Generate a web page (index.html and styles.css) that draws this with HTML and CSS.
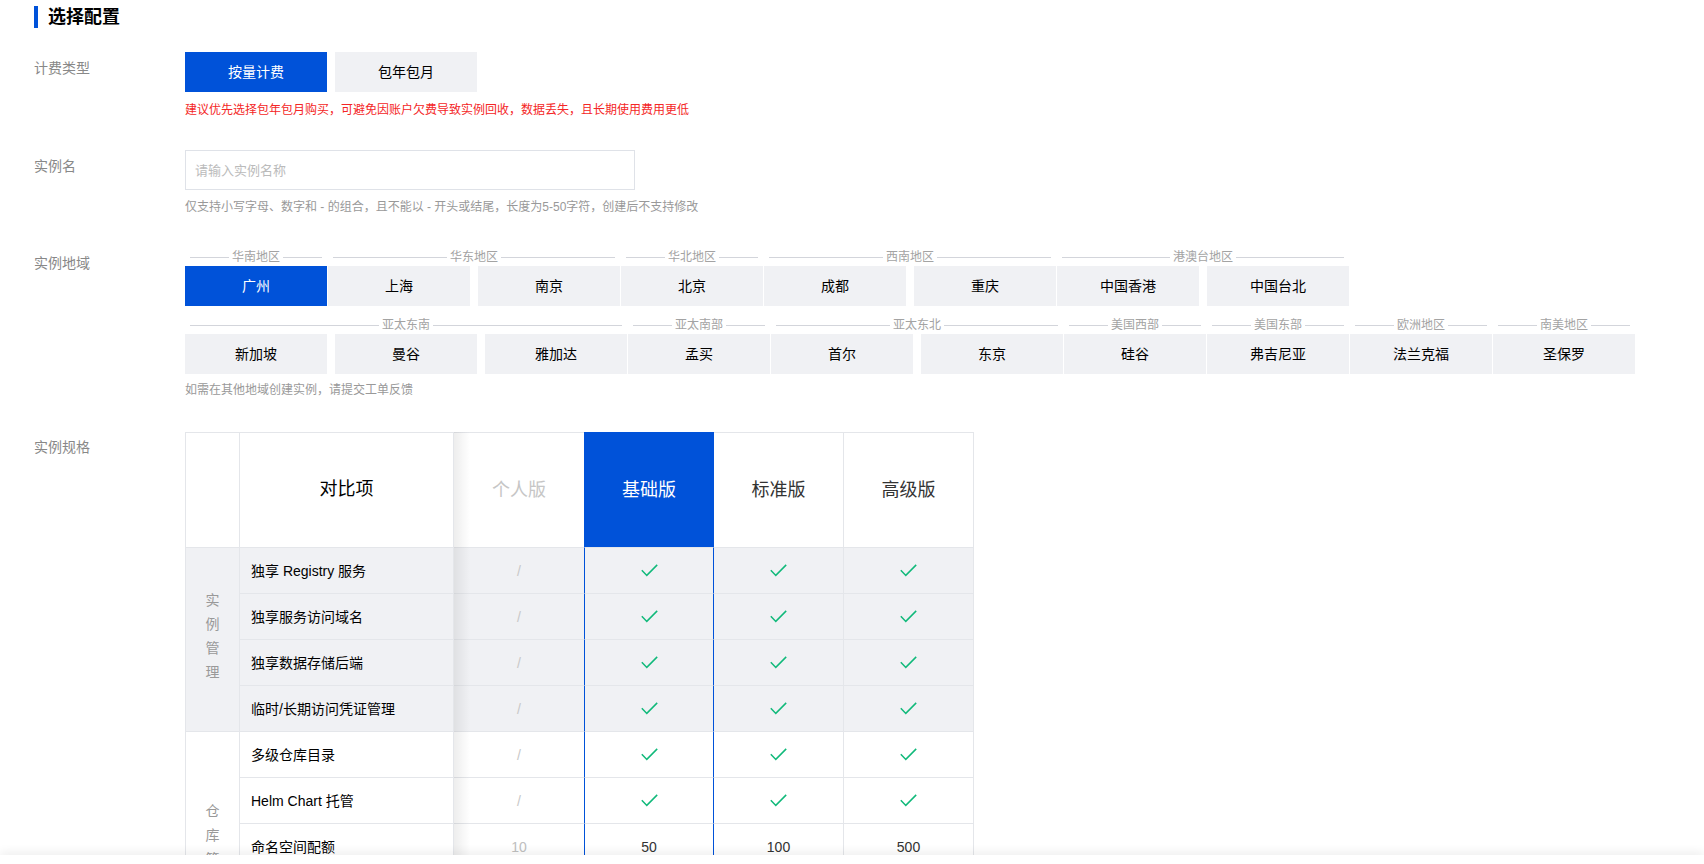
FILE: index.html
```html
<!DOCTYPE html>
<html lang="zh-CN">
<head>
<meta charset="utf-8">
<title>选择配置</title>
<link rel="stylesheet" href="styles.css">
</head>
<body>
<div class="page">
  <h2 class="title">选择配置</h2>

  <div class="form">
    <div class="row row-billing">
      <div class="label">计费类型</div>
      <div class="content">
        <div class="seg">
          <button class="btn active">按量计费</button>
          <button class="btn">包年包月</button>
        </div>
        <div class="note">建议优先选择包年包月购买，可避免因账户欠费导致实例回收，数据丢失，且长期使用费用更低</div>
      </div>
    </div>

    <div class="row row-name">
      <div class="label">实例名</div>
      <div class="content">
        <input class="input" type="text" placeholder="请输入实例名称">
        <div class="help help-name">仅支持小写字母、数字和 - 的组合，且不能以 - 开头或结尾，长度为5-50字符，创建后不支持修改</div>
      </div>
    </div>

    <div class="row row-region">
      <div class="label">实例地域</div>
      <div class="content">
        <div class="region-line">
          <div class="group"><div class="group-label"><span>华南地区</span></div><div class="group-btns"><button class="btn active">广州</button></div></div>
          <div class="group"><div class="group-label"><span>华东地区</span></div><div class="group-btns"><button class="btn">上海</button><button class="btn">南京</button></div></div>
          <div class="group"><div class="group-label"><span>华北地区</span></div><div class="group-btns"><button class="btn">北京</button></div></div>
          <div class="group"><div class="group-label"><span>西南地区</span></div><div class="group-btns"><button class="btn">成都</button><button class="btn">重庆</button></div></div>
          <div class="group"><div class="group-label"><span>港澳台地区</span></div><div class="group-btns"><button class="btn">中国香港</button><button class="btn">中国台北</button></div></div>
        </div>
        <div class="region-line second">
          <div class="group"><div class="group-label"><span>亚太东南</span></div><div class="group-btns"><button class="btn">新加坡</button><button class="btn">曼谷</button><button class="btn">雅加达</button></div></div>
          <div class="group"><div class="group-label"><span>亚太南部</span></div><div class="group-btns"><button class="btn">孟买</button></div></div>
          <div class="group"><div class="group-label"><span>亚太东北</span></div><div class="group-btns"><button class="btn">首尔</button><button class="btn">东京</button></div></div>
          <div class="group"><div class="group-label"><span>美国西部</span></div><div class="group-btns"><button class="btn">硅谷</button></div></div>
          <div class="group"><div class="group-label"><span>美国东部</span></div><div class="group-btns"><button class="btn">弗吉尼亚</button></div></div>
          <div class="group"><div class="group-label"><span>欧洲地区</span></div><div class="group-btns"><button class="btn">法兰克福</button></div></div>
          <div class="group"><div class="group-label"><span>南美地区</span></div><div class="group-btns"><button class="btn">圣保罗</button></div></div>
        </div>
        <div class="help help-region">如需在其他地域创建实例，请提交工单反馈</div>
      </div>
    </div>

    <div class="row row-spec">
      <div class="label">实例规格</div>
      <div class="content">
        <div class="spec-wrap">
          <div class="spec">
            <div class="c h cat first"></div>
            <div class="c h head-item">对比项</div>
            <div class="c h v1 disabled">个人版</div>
            <div class="c h v2 selected">基础版</div>
            <div class="c h v3">标准版</div>
            <div class="c h v4">高级版</div>

            <div class="c cat first grey span4"><span class="vtext">实例管理</span></div>
            <div class="c item grey">独享 Registry 服务</div>
            <div class="c v1 grey slash">/</div>
            <div class="c v2 grey"><svg class="ok" viewBox="0 0 17 13"><path d="M0.8 6.2 L5.8 11.4 L16.2 0.9"/></svg></div>
            <div class="c v3 grey"><svg class="ok" viewBox="0 0 17 13"><path d="M0.8 6.2 L5.8 11.4 L16.2 0.9"/></svg></div>
            <div class="c v4 grey"><svg class="ok" viewBox="0 0 17 13"><path d="M0.8 6.2 L5.8 11.4 L16.2 0.9"/></svg></div>

            <div class="c item grey">独享服务访问域名</div>
            <div class="c v1 grey slash">/</div>
            <div class="c v2 grey"><svg class="ok" viewBox="0 0 17 13"><path d="M0.8 6.2 L5.8 11.4 L16.2 0.9"/></svg></div>
            <div class="c v3 grey"><svg class="ok" viewBox="0 0 17 13"><path d="M0.8 6.2 L5.8 11.4 L16.2 0.9"/></svg></div>
            <div class="c v4 grey"><svg class="ok" viewBox="0 0 17 13"><path d="M0.8 6.2 L5.8 11.4 L16.2 0.9"/></svg></div>

            <div class="c item grey">独享数据存储后端</div>
            <div class="c v1 grey slash">/</div>
            <div class="c v2 grey"><svg class="ok" viewBox="0 0 17 13"><path d="M0.8 6.2 L5.8 11.4 L16.2 0.9"/></svg></div>
            <div class="c v3 grey"><svg class="ok" viewBox="0 0 17 13"><path d="M0.8 6.2 L5.8 11.4 L16.2 0.9"/></svg></div>
            <div class="c v4 grey"><svg class="ok" viewBox="0 0 17 13"><path d="M0.8 6.2 L5.8 11.4 L16.2 0.9"/></svg></div>

            <div class="c item grey">临时/长期访问凭证管理</div>
            <div class="c v1 grey slash">/</div>
            <div class="c v2 grey"><svg class="ok" viewBox="0 0 17 13"><path d="M0.8 6.2 L5.8 11.4 L16.2 0.9"/></svg></div>
            <div class="c v3 grey"><svg class="ok" viewBox="0 0 17 13"><path d="M0.8 6.2 L5.8 11.4 L16.2 0.9"/></svg></div>
            <div class="c v4 grey"><svg class="ok" viewBox="0 0 17 13"><path d="M0.8 6.2 L5.8 11.4 L16.2 0.9"/></svg></div>

            <div class="c cat first span5"><span class="vtext">仓库管理</span></div>
            <div class="c item">多级仓库目录</div>
            <div class="c v1 slash">/</div>
            <div class="c v2"><svg class="ok" viewBox="0 0 17 13"><path d="M0.8 6.2 L5.8 11.4 L16.2 0.9"/></svg></div>
            <div class="c v3"><svg class="ok" viewBox="0 0 17 13"><path d="M0.8 6.2 L5.8 11.4 L16.2 0.9"/></svg></div>
            <div class="c v4"><svg class="ok" viewBox="0 0 17 13"><path d="M0.8 6.2 L5.8 11.4 L16.2 0.9"/></svg></div>

            <div class="c item">Helm Chart 托管</div>
            <div class="c v1 slash">/</div>
            <div class="c v2"><svg class="ok" viewBox="0 0 17 13"><path d="M0.8 6.2 L5.8 11.4 L16.2 0.9"/></svg></div>
            <div class="c v3"><svg class="ok" viewBox="0 0 17 13"><path d="M0.8 6.2 L5.8 11.4 L16.2 0.9"/></svg></div>
            <div class="c v4"><svg class="ok" viewBox="0 0 17 13"><path d="M0.8 6.2 L5.8 11.4 L16.2 0.9"/></svg></div>

            <div class="c item">命名空间配额</div>
            <div class="c v1 num muted">10</div>
            <div class="c v2 num">50</div>
            <div class="c v3 num">100</div>
            <div class="c v4 num">500</div>

            <div class="c item">仓库配额</div>
            <div class="c v1 num muted">100</div>
            <div class="c v2 num">1000</div>
            <div class="c v3 num">3000</div>
            <div class="c v4 num">5000</div>

            <div class="c item">Chart 配额</div>
            <div class="c v1 num muted">10</div>
            <div class="c v2 num">1000</div>
            <div class="c v3 num">3000</div>
            <div class="c v4 num">5000</div>
          </div>
          <div class="fixed-shadow"></div>
        </div>
      </div>
    </div>
  </div>
</div>
<div class="footer-bar"></div>
</body>
</html>
```

FILE: styles.css
```css
* { box-sizing: border-box; }

html, body {
  margin: 0;
  padding: 0;
  background: #fff;
}

body {
  font-family: "Liberation Sans", "Noto Sans CJK SC", sans-serif;
  color: #000;
  font-size: 14px;
}

.page {
  padding: 6px 0 80px 34px;
}

.title {
  margin: 0;
  display: flex;
  align-items: center;
  height: 22px;
  font-size: 18px;
  line-height: 22px;
  font-weight: bold;
  color: #000;
}

.title::before {
  content: "";
  width: 4px;
  height: 22px;
  background: #0052d9;
  margin-right: 10px;
}

.form {
  margin-top: 24px;
}

.row {
  display: flex;
  align-items: flex-start;
}

.label {
  width: 151px;
  flex: none;
  padding-top: 6px;
  font-size: 14px;
  line-height: 20px;
  color: #888;
}

.content {
  flex: none;
}

.row-name { margin-top: 31px; }
.row-region { margin-top: 31px; }
.row-spec { margin-top: 32px; }

.seg {
  display: flex;
  gap: 8px;
}

.btn {
  width: 142px;
  height: 40px;
  border: 0;
  margin: 0;
  padding: 0;
  background: #f0f1f4;
  color: #000;
  font-family: "Liberation Sans", "Noto Sans CJK SC", sans-serif;
  font-size: 14px;
  line-height: 40px;
  text-align: center;
  cursor: pointer;
}

.btn.active {
  background: #0052d9;
  color: #fff;
}

.note {
  margin-top: 9px;
  font-size: 12px;
  line-height: 18px;
  color: #f42626;
}

.input {
  display: block;
  width: 450px;
  height: 40px;
  border: 1px solid #dfe2e8;
  padding: 0 9px;
  font-family: "Liberation Sans", "Noto Sans CJK SC", sans-serif;
  font-size: 13px;
  color: #000;
  outline: none;
}

.input::placeholder {
  color: #bbb;
}

.help {
  font-size: 12px;
  line-height: 18px;
  color: #999;
}

.help-name { margin-top: 8px; }
.help-region { margin-top: 7px; }

.region-line {
  display: flex;
  gap: 1px;
}

.region-line.second {
  margin-top: 9px;
}

.group {
  display: flex;
  flex-direction: column;
}

.group-label {
  height: 18px;
  margin: 1px 5px 0;
  display: flex;
  align-items: center;
  gap: 3px;
  font-size: 12px;
  line-height: 18px;
  color: #a3a3a3;
  white-space: nowrap;
}

.group-label::before,
.group-label::after {
  content: "";
  flex: 1;
  height: 1px;
  background: #d3d5db;
}

.group-btns {
  margin-top: 0;
  display: flex;
  gap: 8px;
}

/* spec table */
.spec-wrap {
  position: relative;
  margin-top: 1px;
  width: 789px;
}

.spec {
  display: grid;
  grid-template-columns: 55px 214px 130px 130px 130px 130px;
  grid-template-rows: 116px repeat(9, 46px);
}

.c {
  border-right: 1px solid #e4e6ea;
  border-bottom: 1px solid #e4e6ea;
  display: flex;
  align-items: center;
  justify-content: center;
  font-size: 14px;
  line-height: 20px;
  background: #fff;
}

.c.h {
  border-top: 1px solid #e4e6ea;
  font-size: 18px;
  line-height: 24px;
  color: #333;
}

.c.first {
  border-left: 1px solid #e4e6ea;
}

.c.h.head-item { color: #000; padding-bottom: 2px; }
.c.h.disabled { color: #c6c6c6; }
.c.h.selected {
  background: #0052d9;
  color: #fff;
  border-top-color: #0052d9;
  border-right-color: #0052d9;
}

.c.v1 { border-right: 0; }

.c.v2 {
  border-left: 1px solid #0052d9;
  border-right: 1px solid #0052d9;
}

.c.h.v2 {
  border-left-color: #0052d9;
  border-bottom-color: #e4e6ea;
}

.c.item {
  justify-content: flex-start;
  padding-left: 11px;
  color: #000;
}

.c.grey { background: #f0f1f4; }

.cat {
  color: #999;
}

.span4 { grid-row: span 4; }
.span5 { grid-row: span 5; }

.vtext {
  display: block;
  width: 14px;
  font-size: 14px;
  line-height: 24px;
  text-align: center;
  word-break: break-all;
}

.span4 .vtext { margin-bottom: 8px; }

.slash { color: #c8c8c8; }
.num { color: #333; }
.num.muted { color: #c0c0c0; }

.ok {
  width: 17px;
  height: 13px;
  fill: none;
  stroke: #10b97a;
  stroke-width: 1.5;
}

.fixed-shadow {
  position: absolute;
  top: 0;
  bottom: 0;
  left: 269px;
  width: 16px;
  background: linear-gradient(to right, rgba(0, 0, 0, 0.07), rgba(0, 0, 0, 0));
  pointer-events: none;
}

.footer-bar {
  position: fixed;
  left: 0;
  right: 0;
  bottom: 0;
  height: 9px;
  background: #fff;
  box-shadow: 0 -3px 10px rgba(0, 0, 0, 0.07);
}
```
